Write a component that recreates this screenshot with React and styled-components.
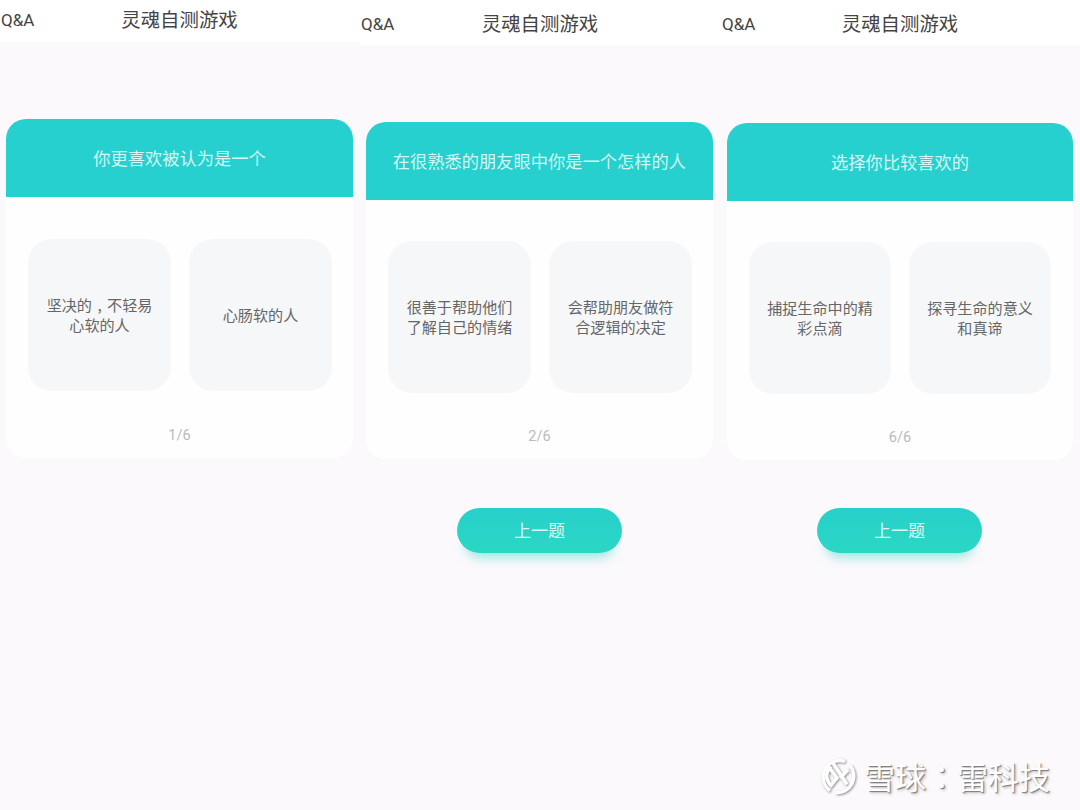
import styled, { createGlobalStyle } from "styled-components"

const GlobalStyle = createGlobalStyle`
  html, body {
    margin: 0;
    padding: 0;
    background: #fbf9fc;
  }
  body {
    font-family: "Noto Sans CJK SC", "Noto Sans", sans-serif;
  }
`

const Page = styled.div`
  position: relative;
  width: 1080px;
  height: 810px;
  overflow: hidden;
  display: flex;
  background: #fbf9fc;
`

const Phone = styled.section`
  width: ${(p) => p.$width}px;
  flex: none;
  display: flex;
  flex-direction: column;
`

const Header = styled.header`
  height: ${(p) => p.$height}px;
  box-sizing: border-box;
  background: #ffffff;
  display: grid;
  grid-template-columns: 1fr auto 1fr;
  align-items: start;
  padding: ${(p) => p.$top}px 1px 0 0;
  color: #444444;
`

const Back = styled.span`
  font-family: "Roboto", sans-serif;
  font-size: 17px;
  line-height: 26px;
  padding-left: 1px;
`

const HeaderTitle = styled.h1`
  margin: 0;
  font-size: 19.4px;
  font-weight: 400;
  line-height: 24px;
`

const Card = styled.div`
  margin: ${(p) => p.$top}px ${(p) => p.$right}px 0 6px;
  height: ${(p) => p.$height}px;
  background: #fefefe;
  border-radius: 20px;
  display: flex;
  flex-direction: column;
`

const Question = styled.div`
  height: 78px;
  flex: none;
  box-sizing: border-box;
  padding-bottom: 2px;
  border-radius: 20px 20px 0 0;
  background: #26d0ce;
  color: #d4f7f5;
  font-size: 17.25px;
  display: flex;
  align-items: center;
  justify-content: center;
`

const Options = styled.div`
  margin-top: ${(p) => p.$top}px;
  padding: 0 ${(p) => p.$right}px 0 22px;
  display: grid;
  grid-template-columns: 1fr 1fr;
  gap: 18px;
`

const Option = styled.div`
  height: 152px;
  border-radius: 24px;
  background: #f6f7f9;
  color: #666666;
  font-size: 15.1px;
  line-height: 20px;
  padding: 0 16px 3px;
  box-sizing: border-box;
  display: flex;
  align-items: center;
  justify-content: center;
  text-align: center;
`

// comma sits low in the middle of its cell in the picture
const Comma = styled.span`
  display: inline-block;
  width: 1em;
  text-align: center;
`

// the traditional-chinese cut centres the colon in its cell
const Colon = styled.span`
  font-family: "Noto Sans CJK TC", sans-serif;
`

const Counter = styled.div`
  margin-top: auto;
  padding-bottom: 12px;
  text-align: center;
  color: #bbbbbb;
  font-family: "Roboto", sans-serif;
  font-size: 14.5px;
  line-height: 20px;
`

const PrevButton = styled.button`
  align-self: center;
  margin: ${(p) => p.$top}px 2px 0 0;
  width: 165px;
  height: 45px;
  padding: 0 0 2px;
  border: 0;
  border-radius: 23px;
  background: linear-gradient(#27d0ca, #2ad7c4);
  box-shadow: 0 13px 12px -9px rgba(40, 212, 198, 0.5);
  color: #d8f8f2;
  font-family: inherit;
  font-size: 17px;
`

const Watermark = styled.div`
  position: absolute;
  right: 30px;
  top: 754px;
  display: flex;
  align-items: center;
  gap: 8px;
  color: #ffffff;
  font-size: 31px;
  line-height: 44px;
  text-shadow: 1px 1px 1px #7a7a7a, 2px 2px 3px rgba(0, 0, 0, 0.25);
`

const phones = [
  {
    width: 360,
    headerHeight: 42,
    headerTop: 7,
    cardTop: 77,
    cardRight: 7,
    cardHeight: 339,
    optionsTop: 42,
    optionsRight: 21,
    question: "你更喜欢被认为是一个",
    options: [[["坚决的", <Comma key="comma">,</Comma>, "不轻易"], "心软的人"], ["心肠软的人"]],
    counter: "1/6",
  },
  {
    width: 361,
    headerHeight: 45,
    headerTop: 11,
    cardTop: 77,
    cardRight: 8,
    cardHeight: 337,
    optionsTop: 41,
    optionsRight: 21,
    question: "在很熟悉的朋友眼中你是一个怎样的人",
    options: [["很善于帮助他们", "了解自己的情绪"], ["会帮助朋友做符", "合逻辑的决定"]],
    counter: "2/6",
    prevTop: 49,
  },
  {
    width: 359,
    headerHeight: 45,
    headerTop: 11,
    cardTop: 78,
    cardRight: 7,
    cardHeight: 337,
    optionsTop: 41,
    optionsRight: 22,
    question: "选择你比较喜欢的",
    options: [["捕捉生命中的精", "彩点滴"], ["探寻生命的意义", "和真谛"]],
    counter: "6/6",
    prevTop: 48,
  },
]

const Logo = () => (
  <svg width="36" height="38" viewBox="0 0 36 38" fill="none" stroke="#ffffff" strokeWidth="3.4" style={{ filter: "drop-shadow(1px 1px 1px #8f8f8f)" }}>
    <path d="M10 33.5A16.5 16.5 0 0 1 25 4.5" />
    <path d="M30 8.5A16.5 16.5 0 0 1 16 35.5" />
    <path d="M11 9.5C5 16 5 22 11 28.5L17 21L9.5 11" />
    <path d="M13 6L27 27.5" />
    <path d="M28 13L20 21" />
  </svg>
)

const App = () => {
  return (
    <Page>
      <GlobalStyle />
      {phones.map((phone) => (
        <Phone key={phone.counter} $width={phone.width}>
          <Header $height={phone.headerHeight} $top={phone.headerTop}>
            <Back>Q&amp;A</Back>
            <HeaderTitle>灵魂自测游戏</HeaderTitle>
          </Header>
          <Card $top={phone.cardTop} $right={phone.cardRight} $height={phone.cardHeight}>
            <Question>{phone.question}</Question>
            <Options $top={phone.optionsTop} $right={phone.optionsRight}>
              {phone.options.map((lines, i) => (
                <Option key={i}>
                  <span>
                    {lines.map((line, j) => (
                      <div key={j}>{line}</div>
                    ))}
                  </span>
                </Option>
              ))}
            </Options>
            <Counter>{phone.counter}</Counter>
          </Card>
          {phone.prevTop && <PrevButton $top={phone.prevTop}>上一题</PrevButton>}
        </Phone>
      ))}
      <Watermark>
        <Logo />
        <span>雪球<Colon>：</Colon>雷科技</span>
      </Watermark>
    </Page>
  )
}

export default App
